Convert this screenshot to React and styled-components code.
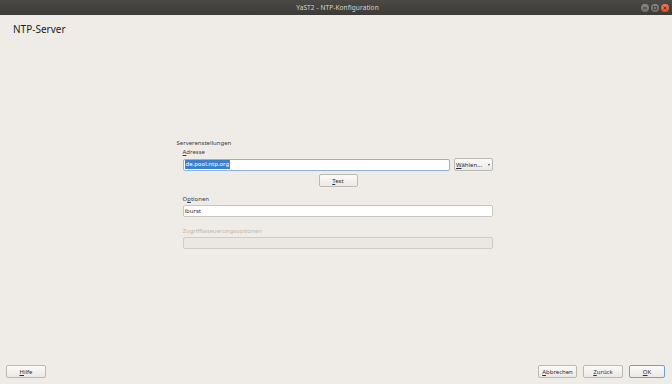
import React from "react";
import styled, { createGlobalStyle } from "styled-components";

const Global = createGlobalStyle`
  html, body { margin: 0; padding: 0; }
  body { font-family: "Noto Sans", "DejaVu Sans", sans-serif; }
`;

const Window = styled.div`
  width: 672px;
  height: 384px;
  display: flex;
  flex-direction: column;
  background: #efebe7;
  overflow: hidden;
  color: #3c3c3c;
`;

const TitleBar = styled.div`
  height: 15px;
  flex: none;
  display: grid;
  grid-template-columns: 1fr auto 1fr;
  align-items: center;
  background: linear-gradient(#4a4945, #3c3b37);
  padding: 0 3px 0 6px;
`;

const TitleText = styled.div`
  grid-column: 2;
  font-size: 6.5px;
  color: #d8d4cc;
  letter-spacing: 0.1px;
`;

const Controls = styled.div`
  justify-self: end;
  display: flex;
  gap: 2px;
`;

const Ctl = styled.span`
  width: 8px;
  height: 8px;
  border-radius: 50%;
  background: ${(p) => (p.$close ? "linear-gradient(#f27b52,#e2521f)" : "linear-gradient(#8a8983,#6c6b66)")};
  display: flex;
  align-items: center;
  justify-content: center;
`;

const Header = styled.div`
  flex: none;
  padding: 7px 13px 0;
  height: 31px;
  box-sizing: border-box;
  font-size: 10px;
  color: #1e1e1e;
`;

const Main = styled.div`
  flex: 1;
  display: flex;
  justify-content: center;
  padding-top: 93px;
  padding-right: 3px;
`;

const Form = styled.div`
  width: 316px;
  display: flex;
  flex-direction: column;
`;

const GroupTitle = styled.div`
  font-size: 6px;
  line-height: 8px;
  height: 8px;
`;

const Body = styled.div`
  padding-left: 6px;
  display: flex;
  flex-direction: column;
`;

const Label = styled.div`
  font-size: 6px;
  line-height: 8px;
  height: 8px;
  margin-top: ${(p) => p.$mt || 0}px;
  margin-bottom: 2px;
  color: ${(p) => (p.$disabled ? "#bdb8b1" : "#3c3c3c")};
`;

const Row = styled.div`
  display: flex;
  gap: 4px;
  align-items: center;
`;

const Input = styled.div`
  flex: 1;
  height: 12px;
  box-sizing: border-box;
  border: 1px solid ${(p) => (p.$focus ? "#8fb3d8" : p.$disabled ? "#cfcbc5" : "#c9c5bf")};
  border-radius: 2px;
  background: ${(p) => (p.$disabled ? "#ebe7e2" : "#ffffff")};
  font-size: 6px;
  line-height: 10px;
  padding: 0 1px;
  display: flex;
  align-items: center;
  color: #2e2e2e;
`;

const Selected = styled.span`
  background: #3b7fd0;
  color: #ffffff;
  padding: 0 1px;
  line-height: 9px;
`;

const Button = styled.div`
  width: ${(p) => p.$w || 39}px;
  height: 13px;
  box-sizing: border-box;
  border: 1px solid ${(p) => (p.$default ? "#6f9fd0" : "#bcb8b2")};
  border-radius: 2px;
  background: linear-gradient(#fbfaf9, #ebe9e6);
  font-size: 6px;
  color: #2e2e2e;
  display: flex;
  align-items: center;
  justify-content: center;
  gap: 6px;
  flex: none;
  u { text-decoration: underline; text-underline-offset: 1px; }
`;

const Arrow = styled.span`
  width: 0;
  height: 0;
  border-left: 1.5px solid transparent;
  border-right: 1.5px solid transparent;
  border-top: 2px solid #444;
`;

const Center = styled.div`
  display: flex;
  justify-content: center;
  margin-top: 3px;
  padding-left: 1px;
`;

const Footer = styled.div`
  flex: none;
  height: 19px;
  padding: 0 7px 0 6px;
  display: flex;
  justify-content: space-between;
  align-items: flex-start;
`;

const Group = styled.div`
  display: flex;
  gap: 6px;
`;

export default function App() {
  return (
    <>
      <Global />
      <Window>
        <TitleBar>
          <TitleText>YaST2 - NTP-Konfiguration</TitleText>
          <Controls>
            <Ctl>
              <svg width="4" height="2" viewBox="0 0 4 2"><rect width="4" height="1" y="0.5" fill="#3c3b37" /></svg>
            </Ctl>
            <Ctl>
              <svg width="4" height="4" viewBox="0 0 4 4"><rect x="0.5" y="0.5" width="3" height="3" fill="none" stroke="#3c3b37" strokeWidth="0.8" /></svg>
            </Ctl>
            <Ctl $close>
              <svg width="4" height="4" viewBox="0 0 4 4"><path d="M0.5 0.5L3.5 3.5M3.5 0.5L0.5 3.5" stroke="#3c3b37" strokeWidth="0.9" /></svg>
            </Ctl>
          </Controls>
        </TitleBar>
        <Header>NTP-Server</Header>
        <Main>
          <Form>
            <GroupTitle>Serverenstellungen</GroupTitle>
            <Body>
              <Label $mt={1}><u>A</u>dresse</Label>
              <Row>
                <Input $focus><Selected>de.pool.ntp.org</Selected></Input>
                <Button $w={39}><span><u>W</u>ählen...</span><Arrow /></Button>
              </Row>
              <Center>
                <Button $w={39}><span><u>T</u>est</span></Button>
              </Center>
              <Label $mt={8}>O<u>p</u>tionen</Label>
              <Row><Input>iburst</Input></Row>
              <Label $mt={10} $disabled>Zugriffssteuerungsoptionen</Label>
              <Row><Input $disabled /></Row>
            </Body>
          </Form>
        </Main>
        <Footer>
          <Button $w={40}><span><u>H</u>ilfe</span></Button>
          <Group>
            <Button $w={39}><span><u>A</u>bbrechen</span></Button>
            <Button $w={40}><span><u>Z</u>urück</span></Button>
            <Button $w={36} $default><span><u>O</u>K</span></Button>
          </Group>
        </Footer>
      </Window>
    </>
  );
}
